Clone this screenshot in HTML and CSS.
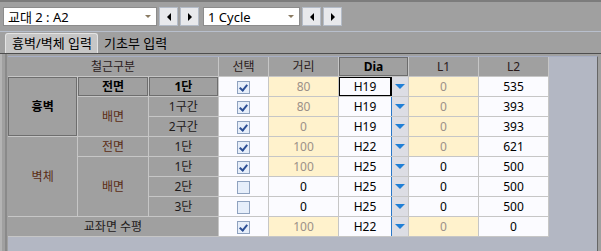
FILE: index.html
```html
<!DOCTYPE html>
<html lang="ko">
<head>
  <meta charset="UTF-8">
  <title>철근 입력</title>
  <link rel="stylesheet" href="styles.css">
</head>
<body>
  <div class="toolbar">
    <div class="combo combo-wide">
      <span>교대 2 : A2</span>
      <span class="combo-arrow"></span>
    </div>
    <button class="nav-btn"><span class="tri-left"></span></button>
    <button class="nav-btn"><span class="tri-right"></span></button>
    <div class="combo combo-narrow">
      <span>1 Cycle</span>
      <span class="combo-arrow"></span>
    </div>
    <button class="nav-btn"><span class="tri-left"></span></button>
    <button class="nav-btn"><span class="tri-right"></span></button>
  </div>

  <div class="tabs">
    <div class="tab active">흉벽/벽체 입력</div>
    <div class="tab">기초부 입력</div>
  </div>

  <div class="panel">
    <div class="viewport">
      <table class="grid">
        <tr class="head">
          <th colspan="3" class="w-group">철근구분</th>
          <th class="w-sel">선택</th>
          <th class="w-num">거리</th>
          <th class="w-dia cur">Dia</th>
          <th class="w-num">L1</th>
          <th class="w-num">L2</th>
        </tr>
        <tr>
          <td rowspan="3" class="fix raised bold">흉벽</td>
          <td class="fix raised bold">전면</td>
          <td class="fix raised bold">1단</td>
          <td class="sel"><span class="chk on"></span></td>
          <td class="ro">80</td>
          <td class="dia focus"><div class="dia-in"><span class="dia-val">H19</span><span class="dia-btn"></span></div></td>
          <td class="ro">0</td>
          <td class="val">535</td>
        </tr>
        <tr>
          <td rowspan="2" class="fix brown">배면</td>
          <td class="fix">1구간</td>
          <td class="sel"><span class="chk on"></span></td>
          <td class="ro">80</td>
          <td class="dia"><div class="dia-in"><span class="dia-val">H19</span><span class="dia-btn"></span></div></td>
          <td class="ro">0</td>
          <td class="val">393</td>
        </tr>
        <tr>
          <td class="fix">2구간</td>
          <td class="sel"><span class="chk on"></span></td>
          <td class="ro">0</td>
          <td class="dia"><div class="dia-in"><span class="dia-val">H19</span><span class="dia-btn"></span></div></td>
          <td class="ro">0</td>
          <td class="val">393</td>
        </tr>
        <tr>
          <td rowspan="4" class="fix brown">벽체</td>
          <td class="fix brown">전면</td>
          <td class="fix">1단</td>
          <td class="sel"><span class="chk on"></span></td>
          <td class="ro">100</td>
          <td class="dia"><div class="dia-in"><span class="dia-val">H22</span><span class="dia-btn"></span></div></td>
          <td class="ro">0</td>
          <td class="val">621</td>
        </tr>
        <tr>
          <td rowspan="3" class="fix brown">배면</td>
          <td class="fix">1단</td>
          <td class="sel"><span class="chk on"></span></td>
          <td class="ro">100</td>
          <td class="dia"><div class="dia-in"><span class="dia-val">H25</span><span class="dia-btn"></span></div></td>
          <td class="val">0</td>
          <td class="val">500</td>
        </tr>
        <tr>
          <td class="fix">2단</td>
          <td class="sel"><span class="chk"></span></td>
          <td class="val">0</td>
          <td class="dia"><div class="dia-in"><span class="dia-val">H25</span><span class="dia-btn"></span></div></td>
          <td class="val">0</td>
          <td class="val">500</td>
        </tr>
        <tr>
          <td class="fix">3단</td>
          <td class="sel"><span class="chk"></span></td>
          <td class="val">0</td>
          <td class="dia"><div class="dia-in"><span class="dia-val">H25</span><span class="dia-btn"></span></div></td>
          <td class="val">0</td>
          <td class="val">500</td>
        </tr>
        <tr>
          <td colspan="3" class="fix">교좌면 수평</td>
          <td class="sel"><span class="chk on"></span></td>
          <td class="ro">100</td>
          <td class="dia"><div class="dia-in"><span class="dia-val">H22</span><span class="dia-btn"></span></div></td>
          <td class="ro">0</td>
          <td class="val">0</td>
        </tr>
      </table>
    </div>
  </div>
</body>
</html>
```

FILE: styles.css
```css
body {
  margin: 0;
  width: 601px;
  height: 251px;
  overflow: hidden;
  background: #a0a0a0;
  font-family: "Noto Sans", "Noto Sans CJK KR", sans-serif;
  font-size: 12px;
  color: #1a1a1a;
  border-top: 2px solid #7c7c7c;
  box-sizing: border-box;
}

/* 상단 툴바 */
.toolbar {
  display: flex;
  align-items: center;
  height: 30px;
  padding-left: 3px;
  gap: 2px;
  border-bottom: 1px solid #b8bfcc;
  box-sizing: border-box;
}

.combo {
  display: flex;
  align-items: center;
  justify-content: space-between;
  height: 19px;
  background: #fff;
  border: 1px solid #8c8c8c;
  box-sizing: border-box;
  padding: 0 5px 0 4px;
  font-size: 13px;
  color: #000;
}

.combo-wide {
  width: 154px;
}

.combo-narrow {
  width: 97px;
  margin-left: 2px;
}

.combo-arrow {
  width: 0;
  height: 0;
  border-left: 3px solid transparent;
  border-right: 3px solid transparent;
  border-top: 3px solid #8a7b62;
}

.nav-btn {
  width: 19px;
  height: 19px;
  padding: 0;
  background: #e8e9ec;
  border: 1px solid #b4bcc8;
  display: flex;
  align-items: center;
  justify-content: center;
}

.tri-left {
  border-top: 4px solid transparent;
  border-bottom: 4px solid transparent;
  border-right: 4px solid #000;
}

.tri-right {
  border-top: 4px solid transparent;
  border-bottom: 4px solid transparent;
  border-left: 4px solid #000;
}

/* 탭 */
.tabs {
  display: flex;
  align-items: flex-end;
  height: 21px;
  padding-left: 5px;
  border-bottom: 1px solid #4e4e4e;
}

.tab {
  height: 19px;
  line-height: 19px;
  padding: 0 6px;
  font-size: 13px;
  color: #000;
}

.tab.active {
  background: #c6c6c6;
  border: 1px solid #e4e4e4;
  border-bottom: none;
  border-radius: 3px 3px 0 0;
  padding: 0 5px 0 6px;
}

/* 그리드 영역 */
.panel {
  padding: 2px 3px 0 8px;
  height: 200px;
  box-shadow: inset 2px 0 0 #b4b4b4, inset 5px 0 0 #a0a0a0, inset 7px 0 0 #8a8a8a;
}

.viewport {
  height: 100%;
  background: #b3b7c3;
  border-top: 1px solid #a6aec4;
  border-right: 1px solid #666;
}

.grid {
  border-collapse: collapse;
  table-layout: fixed;
  text-align: center;
}

.grid th,
.grid td {
  height: 19px;
  padding: 0;
  border: 1px solid #c6c6c6;
  white-space: nowrap;
  line-height: 18px;
}

.grid tr:first-child th {
  border-top: none;
}

.grid tr td:first-child,
.grid tr th:first-child {
  border-left: none;
}

.head th {
  background: #a0a0a0;
  font-weight: normal;
  color: #2a1a1a;
}

.w-group { width: 210px; }
.w-sel { width: 49px; }
.w-num { width: 69px; }
.w-dia { width: 69px; }

.head th.cur {
  font-weight: bold;
  color: #000;
  box-shadow: inset 0 0 0 1px #6c6c6c;
}

.fix {
  background: #a0a0a0;
  color: #1e1a1a;
  width: 69px;
}

.bold {
  font-weight: bold;
  color: #000;
}

.raised {
  box-shadow: inset 0 0 0 1px #6e6e6e;
}

.brown {
  color: #5a2c14;
}

.sel {
  background: #fbfbff;
}

.chk {
  display: inline-block;
  width: 11px;
  height: 11px;
  vertical-align: middle;
  background: #e6eefa;
  border: 1px solid #8fa2bf;
  position: relative;
}

.chk.on::after {
  content: "";
  position: absolute;
  left: 3px;
  top: 1px;
  width: 3px;
  height: 6px;
  border-right: 2px solid #2c4f96;
  border-bottom: 2px solid #2c4f96;
  transform: rotate(40deg);
}

.ro {
  background: #fff2cc;
  color: #9c9088;
}

.val {
  background: #fbfbff;
  color: #000;
}

.dia {
  background: #fbfbff;
  color: #000;
}

.dia-in {
  display: flex;
  height: 19px;
}

.dia-val {
  flex: 1;
  line-height: 19px;
  border-right: 1px solid #2a78c8;
}

.dia-btn {
  width: 16px;
  background: #dcdde4;
  display: flex;
  align-items: center;
  justify-content: center;
}

.dia-btn::before {
  content: "";
  border-left: 5px solid transparent;
  border-right: 5px solid transparent;
  border-top: 5px solid #1f7fd6;
}

.dia.focus .dia-val {
  box-shadow: inset 0 0 0 1px #000;
  border-right: 1px solid #000;
}
```
